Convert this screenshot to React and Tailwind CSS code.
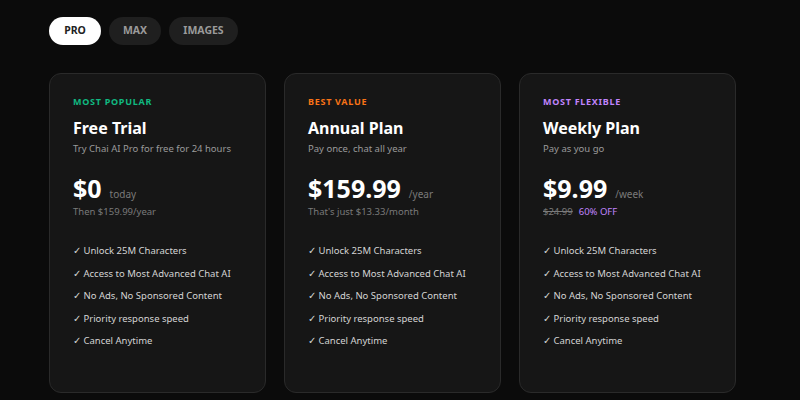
import React from "react";

const FEATURES = [
  "Unlock 25M Characters",
  "Access to Most Advanced Chat AI",
  "No Ads, No Sponsored Content",
  "Priority response speed",
  "Cancel Anytime",
];

const PLANS = [
  {
    tag: "MOST POPULAR",
    tagClass: "text-[#10b981]",
    title: "Free Trial",
    subtitle: "Try Chai AI Pro for free for 24 hours",
    price: "$0",
    unit: "today",
    note: <span>Then $159.99/year</span>,
  },
  {
    tag: "BEST VALUE",
    tagClass: "text-[#f97316]",
    title: "Annual Plan",
    subtitle: "Pay once, chat all year",
    price: "$159.99",
    unit: "/year",
    note: <span>That's just $13.33/month</span>,
  },
  {
    tag: "MOST FLEXIBLE",
    tagClass: "text-[#c084fc]",
    title: "Weekly Plan",
    subtitle: "Pay as you go",
    price: "$9.99",
    unit: "/week",
    note: (
      <span className="flex gap-1.5">
        <span className="line-through">$24.99</span>
        <span className="text-[#c084fc]">60% OFF</span>
      </span>
    ),
  },
];

function PlanCard({ plan }) {
  return (
    <div className="w-[217px] h-[320px] rounded-xl border border-[#2a2a2a] bg-[#161616] px-[23px] pt-[23px]">
      <p className={`text-[9px] font-bold tracking-[0.08em] leading-none ${plan.tagClass}`}>
        {plan.tag}
      </p>
      <h3 className="mt-[12px] text-[16px] font-bold text-white leading-[20px]">
        {plan.title}
      </h3>
      <p className="mt-[4px] text-[9.5px] text-[#9a9a9a] leading-[14px] whitespace-nowrap">
        {plan.subtitle}
      </p>
      <div className="mt-[17px] flex items-baseline gap-2">
        <span className="text-[25px] font-bold text-white leading-[30px]">{plan.price}</span>
        <span className="text-[10px] text-[#7a7a7a]">{plan.unit}</span>
      </div>
      <div className="mt-[2px] text-[9.5px] text-[#7a7a7a] leading-[14px]">{plan.note}</div>
      <ul className="mt-[25px] flex flex-col gap-[8.5px]">
        {FEATURES.map((f) => (
          <li key={f} className="text-[9.5px] text-[#d4d4d4] leading-[14px] whitespace-nowrap">
            ✓ {f}
          </li>
        ))}
      </ul>
    </div>
  );
}

export default function App() {
  return (
    <div
      className="w-[800px] h-[400px] bg-[#0b0b0b] pl-[49px] pt-[17px] overflow-hidden"
      style={{ fontFamily: '"Noto Sans", "Open Sans", sans-serif' }}
    >
      <div className="flex gap-2">
        <button className="h-[28px] w-[52px] rounded-full bg-white text-[10.5px] font-bold text-[#222]">
          PRO
        </button>
        <button className="h-[28px] w-[52px] rounded-full bg-[#1f1f1f] text-[10.5px] font-bold text-[#9a9a9a]">
          MAX
        </button>
        <button className="h-[28px] w-[69px] rounded-full bg-[#1f1f1f] text-[10.5px] font-bold text-[#9a9a9a]">
          IMAGES
        </button>
      </div>
      <div className="mt-[28px] flex gap-[18px]">
        {PLANS.map((p) => (
          <PlanCard key={p.title} plan={p} />
        ))}
      </div>
    </div>
  );
}
